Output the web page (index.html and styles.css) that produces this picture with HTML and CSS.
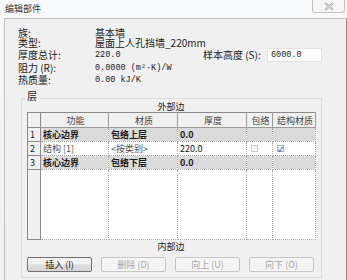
FILE: index.html
```html
<!DOCTYPE html>
<html lang="zh-CN">
<head>
  <meta charset="UTF-8">
  <title>编辑部件</title>
  <link rel="stylesheet" href="styles.css">
</head>
<body>
  <div class="titlebar">
    <span class="title">编辑部件</span>
    <span class="close">
      <svg width="12" height="9" viewBox="0 0 12 9">
        <path d="M2 1 L10 8 M10 1 L2 8" stroke="#a8a8a8" stroke-width="2.2" fill="none"/>
        <path d="M2 1 L10 8 M10 1 L2 8" stroke="#f4f4f4" stroke-width="0.8" fill="none"/>
      </svg>
    </span>
  </div>

  <div class="panel">
    <div class="props">
      <span class="lbl">族:</span><span class="val span3">基本墙</span>
      <span class="lbl">类型:</span><span class="val span3">屋面上人孔挡墙_220mm</span>
      <span class="lbl">厚度总计:</span><span class="val mono">220.0</span>
      <span class="lbl">样本高度 (S):</span><span class="input mono">6000.0</span>
      <span class="lbl">阻力 (R):</span><span class="val mono span3">0.0000 (m²·K)/W</span>
      <span class="lbl">热质量:</span><span class="val mono span3">0.00 kJ/K</span>
    </div>

    <div class="group">
      <div class="legend">层</div>
      <div class="side">外部边</div>
      <table class="layers">
        <thead>
          <tr>
            <th class="num"></th>
            <th class="c-func">功能</th>
            <th class="c-mat">材质</th>
            <th class="c-thick">厚度</th>
            <th class="c-wrap">包络</th>
            <th class="c-struct">结构材质</th>
          </tr>
        </thead>
        <tbody>
          <tr class="core">
            <td class="num">1</td>
            <td>核心边界</td>
            <td>包络上层</td>
            <td>0.0</td>
            <td></td>
            <td></td>
          </tr>
          <tr class="tall">
            <td class="num">2</td>
            <td class="muted">结构 [1]</td>
            <td class="muted">&lt;按类别&gt;</td>
            <td>220.0</td>
            <td><span class="check"></span></td>
            <td><span class="check on">✓</span></td>
          </tr>
          <tr class="core">
            <td class="num">3</td>
            <td>核心边界</td>
            <td>包络下层</td>
            <td>0.0</td>
            <td></td>
            <td></td>
          </tr>
          <tr class="filler">
            <td class="num"></td>
            <td></td>
            <td></td>
            <td></td>
            <td></td>
            <td></td>
          </tr>
        </tbody>
      </table>
      <div class="side inner">内部边</div>
      <div class="buttons">
        <button class="btn">插入 (I)</button>
        <button class="btn" disabled>删除 (D)</button>
        <button class="btn" disabled>向上 (U)</button>
        <button class="btn" disabled>向下 (O)</button>
      </div>
    </div>
  </div>
</body>
</html>
```

FILE: styles.css
```css
:root {
  --face: #f0f0f0;
  --grid: #a9a9a9;
  --core: #dadada;
  --text: #1a1a1a;
}

* {
  box-sizing: border-box;
}

body {
  margin: 0;
  width: 347px;
  height: 280px;
  overflow: hidden;
  background: linear-gradient(#f7f9fb, #eef2f5);
  font-family: "Noto Sans CJK SC", "Noto Sans", sans-serif;
  font-size: 10px;
  color: var(--text);
}

.titlebar {
  height: 18px;
  display: flex;
  align-items: flex-start;
  justify-content: space-between;
}

.title {
  margin: 3px 0 0 5px;
  font-size: 9px;
  line-height: 12px;
  color: #333;
}

.close {
  width: 33px;
  height: 13px;
  margin-right: 2px;
  border: 1px solid #c4c4c4;
  border-top: none;
  border-radius: 0 0 3px 3px;
  background: #f6f6f6;
  display: flex;
  align-items: center;
  justify-content: center;
}

.panel {
  margin-left: 4px;
  height: 262px;
  background: var(--face);
  border: 1px solid #c2c2c2;
  border-right-color: #8c8c8c;
  border-bottom: none;
  padding-top: 8px;
}

.props {
  margin-left: 13px;
  display: grid;
  grid-template-columns: 77px 108px 64px 55px;
  grid-template-rows: 11px 10px 14px 11px 14px;
  align-items: center;
  line-height: 10px;
  color: #222;
}

.span3 {
  grid-column: span 3;
}

.mono {
  font-family: "Liberation Mono", monospace;
  font-size: 8.5px;
}

.val {
  white-space: nowrap;
}

.input {
  height: 14px;
  background: #fff;
  border: 1px solid #e2e2e2;
  padding-left: 3px;
  line-height: 12px;
}

.group {
  margin: 11px 0 0 16px;
  width: 301px;
  height: 180px;
  border: 1px solid #dcdcdc;
  padding: 0 6px 0 5px;
}

.legend {
  width: fit-content;
  margin: -9px 0 0 -1px;
  padding: 0 1px;
  height: 12px;
  line-height: 12px;
  background: var(--face);
}

.side {
  text-align: center;
  font-size: 9px;
  line-height: 10px;
  height: 10px;
}

.side.inner {
  line-height: 14px;
  height: 14px;
  margin-bottom: 3px;
}

.layers {
  width: 288px;
  height: 128px;
  border-collapse: collapse;
  table-layout: fixed;
  background: #fff;
  font-size: 9px;
}

.layers th,
.layers td {
  padding: 0 0 0 2px;
  border-right: 1px dotted var(--grid);
  border-bottom: 1px dotted var(--grid);
  white-space: nowrap;
  overflow: hidden;
  text-align: left;
}

.layers th {
  height: 15px;
  font-weight: normal;
  text-align: center;
  color: #444;
  background: var(--face);
  border: 1px solid #9a9a9a;
  border-top-color: #8a8a8a;
}

.layers .num {
  width: 13px;
  background: var(--face);
  border: 1px solid #8a8a8a;
  border-top-color: #d0d0d0;
  color: #222;
}

.layers th.num {
  border-top-color: #8a8a8a;
}

.c-func { width: 68px; }
.c-mat { width: 69px; }
.c-thick { width: 69px; }
.c-wrap { width: 26px; }
.c-struct { width: 43px; }

.layers tbody tr {
  height: 13px;
}

.layers tbody tr.tall {
  height: 14px;
}

.layers tr.core td {
  background: var(--core);
  font-weight: bold;
}

.layers tr.core td.num {
  background: var(--face);
  font-weight: normal;
}

.layers tr.filler {
  height: auto;
}

.layers .muted {
  color: #555;
}

.check {
  display: block;
  width: 7px;
  height: 7px;
  margin-left: 2px;
  border: 1px solid #c8c8c8;
  background: #fbfbfb;
  font-size: 7px;
  line-height: 6px;
  color: #4060b0;
  text-align: center;
  font-weight: bold;
}

.check.on {
  border-color: #a8b0c8;
  background: #eef0f8;
}

.buttons {
  display: flex;
  gap: 9px;
}

.btn {
  width: 65px;
  height: 15px;
  padding: 0;
  font-family: inherit;
  font-size: 9px;
  line-height: 13px;
  color: #222;
  border: 1px solid #707070;
  border-radius: 2px;
  background: linear-gradient(#f3f3f3 45%, #dcdcdc 55%, #d6d6d6);
}

.btn:disabled {
  color: #a6a6a6;
  border-color: #c6c6c6;
  background: #f4f4f4;
}
```
